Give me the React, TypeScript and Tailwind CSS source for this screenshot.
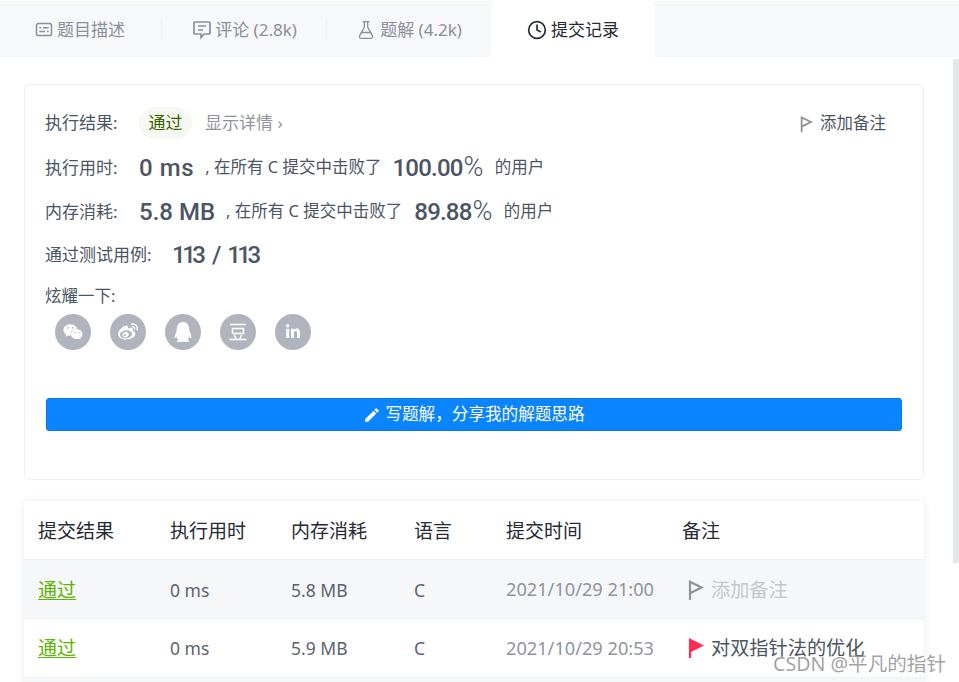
import { Clock, FlaskConical } from 'lucide-react';
import { FaWeixin, FaWeibo, FaQq, FaLinkedinIn } from 'react-icons/fa';
import { MdEdit } from 'react-icons/md';

const cjk = "font-['Noto_Sans','Noto_Sans_CJK_SC',sans-serif]";
const num = "font-['Roboto','Noto_Sans_CJK_SC',sans-serif] font-medium text-[#4b5563]";

function FlagIcon({ filled, className }: { filled?: boolean; className?: string }) {
  return (
    <svg viewBox="0 0 16 20" className={className}>
      <path
        d="M2 20V1.8l11.5 5.7L2 13.2"
        fill={filled ? '#ff2d55' : 'none'}
        stroke={filled ? '#ff2d55' : '#8f9399'}
        strokeWidth="2.2"
      />
    </svg>
  );
}

function DescIcon() {
  return (
    <svg viewBox="0 0 18 16" className="h-[15px] w-[18px]" fill="none" stroke="#8a8f99" strokeWidth="1.6">
      <rect x="1" y="1.5" width="16" height="13" rx="2" />
      <path d="M4 6h2M8 6h6M4 10h6M12 10h2" />
    </svg>
  );
}

function CommentIcon() {
  return (
    <svg viewBox="0 0 18 20" className="h-5 w-[18px]" fill="none" stroke="#8a8f99" strokeWidth="1.7">
      <path d="M2 2h14a1 1 0 0 1 1 1v10a1 1 0 0 1-1 1h-5l-3 3.5V14H2a1 1 0 0 1-1-1V3a1 1 0 0 1 1-1z" />
      <path d="M5 6h8M5 10h5" />
    </svg>
  );
}

function DoubanIcon({ className }: { className?: string }) {
  return (
    <svg viewBox="0 0 20 20" className={className} fill="none" stroke="currentColor" strokeWidth="1.5">
      <path d="M2 2.5h16M4.5 6.5h11v5h-11zM6.5 13l1.5 4M13.5 13L12 17M1.5 17.5h17" />
    </svg>
  );
}

function Tab({ icon, label, active, className }: { icon: React.ReactNode; label: string; active?: boolean; className?: string }) {
  return (
    <div
      className={`flex h-[56px] items-center justify-center gap-1 pt-px text-[17px] ${
        active ? 'rounded-t bg-white text-[#262b33] shadow-[0_0_1px_#e4e6ea]' : 'text-[#8a8f99]'
      } ${className}`}
    >
      {icon}
      <span>{label}</span>
    </div>
  );
}

function Stat({ label, value, rest, pct, valueClass, restClass }: { label: string; value: string; rest: string; pct: string; valueClass: string; restClass: string }) {
  const digits = pct.replace('%', '');
  return (
    <div className="flex h-[44px] items-center whitespace-nowrap pt-px text-[16.5px] text-[#4b5563]">
      <span className="w-[94px] text-[17px]">{label}</span>
      <span className={`${num} text-[24px] ${valueClass}`}>{value}</span>
      <span className={restClass}>{rest}</span>
      <span className={`${num} text-[24px] tracking-[-0.8px]`}>
        {digits}
        <span className="ml-px text-[27px] font-light">%</span>
      </span>
      <span className="ml-[12px]">的用户</span>
    </div>
  );
}

function Row({ time, mem, date, note, striped, flagged }: { time: string; mem: string; date: string; note: string; striped?: boolean; flagged?: boolean }) {
  return (
    <div
      className={`grid h-[59px] grid-cols-[132px_121px_123px_92px_176px_1fr] items-center border-b border-[#f0f1f4] pl-[14px] text-[17.5px] text-[#5b6370] ${striped ? 'bg-[#f6f7f9] pt-[2px]' : 'bg-white pt-px'}`}
    >
      <span className="text-[19px] text-[#5cb300] underline decoration-1 underline-offset-2">通过</span>
      <span>{time}</span>
      <span>{mem}</span>
      <span>C</span>
      <span className="text-[18.2px] text-[#8f959e]">{date}</span>
      <div className="flex items-center gap-[7px] pl-[6px]">
        <FlagIcon filled={flagged} className="h-[20px] w-[16px]" />
        <span className={`text-[19.2px] ${flagged ? 'text-[#4b5563]' : 'text-[#c4c7cc]'}`}>{note}</span>
      </div>
    </div>
  );
}

const shares = [
  <FaWeixin key="wx" className="h-[20px] w-[20px]" />,
  <FaWeibo key="wb" className="h-[20px] w-[20px]" />,
  <FaQq key="qq" className="h-[20px] w-[20px]" />,
  <DoubanIcon key="db" className="h-[20px] w-[20px]" />,
  <FaLinkedinIn key="in" className="h-[16px] w-[16px]" />,
];

export default function App() {
  return (
    <div className={`relative h-[682px] w-[959px] overflow-hidden bg-white ${cjk}`}>
      {/* Tabs */}
      <div className="mt-px flex h-[56px] bg-[#f7f8fa]">
        <Tab icon={<DescIcon />} label="题目描述" className="w-[163px] pr-[3px]" />
        <Tab icon={<CommentIcon />} label="评论 (2.8k)" className="w-[164px]" />
        <Tab icon={<FlaskConical className="h-5 w-5 text-[#8a8f99]" strokeWidth={1.6} />} label="题解 (4.2k)" className="w-[164px]" />
        <Tab icon={<Clock className="h-5 w-5 text-[#262b33]" strokeWidth={2} />} label="提交记录" active className="w-[164px]" />
      </div>

      <div className="ml-[24px] w-[900px] pt-[27px]">
        {/* Result card */}
        <div className="h-[396px] rounded border border-[#f0f1f4] pl-[20px] pt-[16px]">
          <div className="flex h-[44px] items-center text-[17px] text-[#4b5563]">
            <span className="w-[94px]">执行结果:</span>
            <span className="flex h-[32px] w-[53px] items-center justify-center rounded-full bg-[#f5f9f1] text-[#3a5f00]">通过</span>
            <span className="ml-[13px] text-[#8f959e]">显示详情 ›</span>
            <div className="ml-auto mr-[37px] flex items-center gap-[7px] pt-px text-[16.5px]">
              <FlagIcon className="h-[18px] w-[13px]" />
              <span>添加备注</span>
            </div>
          </div>
          <Stat label="执行用时:" value="0 ms" valueClass="tracking-[0.6px]" rest=", 在所有 C 提交中击败了" restClass="ml-[11px] mr-[11px]" pct="100.00%" />
          <Stat label="内存消耗:" value="5.8 MB" valueClass="" rest=", 在所有 C 提交中击败了" restClass="ml-[11px] mr-[12px]" pct="89.88%" />
          <div className="flex h-[42px] items-center pt-px text-[17px] text-[#4b5563]">
            <span className="w-[127px]">通过测试用例:</span>
            <span className={`${num} text-[24px] tracking-[-3.5px] [word-spacing:7px]`}>113 / 113</span>
          </div>
          <div className="mt-[9px] text-[16.5px] leading-[24px] text-[#4b5563]">炫耀一下:</div>
          <div className="mt-[6px] flex gap-[19px] pl-[10px]">
            {shares.map((icon, i) => (
              <div key={i} className="flex h-[36px] w-[36px] items-center justify-center rounded-full bg-[#b0b4bd] text-white">
                {icon}
              </div>
            ))}
          </div>
          <button className="ml-px mt-[48px] flex h-[33px] w-[856px] items-center justify-center gap-[4px] rounded-[3px] border border-[#0a76e0] bg-[#0a84ff] text-[16.6px] text-white">
            <MdEdit className="h-[18px] w-[18px]" />
            写题解，分享我的解题思路
          </button>
        </div>

        {/* Submissions table */}
        <div className="mt-[21px] rounded-t bg-white shadow-[0_0_10px_rgba(0,0,0,0.08)]">
          <div className="grid h-[59px] grid-cols-[132px_121px_123px_92px_176px_1fr] items-center border-b border-[#f0f1f4] pl-[14px] pt-[2px] text-[19px] text-[#262b33]">
            <span>提交结果</span>
            <span>执行用时</span>
            <span>内存消耗</span>
            <span>语言</span>
            <span>提交时间</span>
            <span>备注</span>
          </div>
          <Row time="0 ms" mem="5.8 MB" date="2021/10/29 21:00" note="添加备注" striped />
          <Row time="0 ms" mem="5.9 MB" date="2021/10/29 20:53" note="对双指针法的优化" flagged />
          <div className="h-[20px] bg-[#f6f7f9]" />
        </div>
      </div>

      {/* Scrollbar */}
      <div className="absolute right-0 top-[59px] h-[504px] w-[6px] bg-[#e4e6eb]" />

      {/* Dividers between tabs */}
      <div className="absolute left-[161px] top-[18px] h-[22px] w-px bg-[#eff0f3]" />
      <div className="absolute left-[326px] top-[18px] h-[22px] w-px bg-[#eff0f3]" />

      {/* Watermark */}
      <div className="absolute left-[773px] top-[651px] whitespace-nowrap text-[19.6px] leading-[26px] text-[#8a8a8a]/80">
        CSDN @平凡的指针
      </div>
    </div>
  );
}
